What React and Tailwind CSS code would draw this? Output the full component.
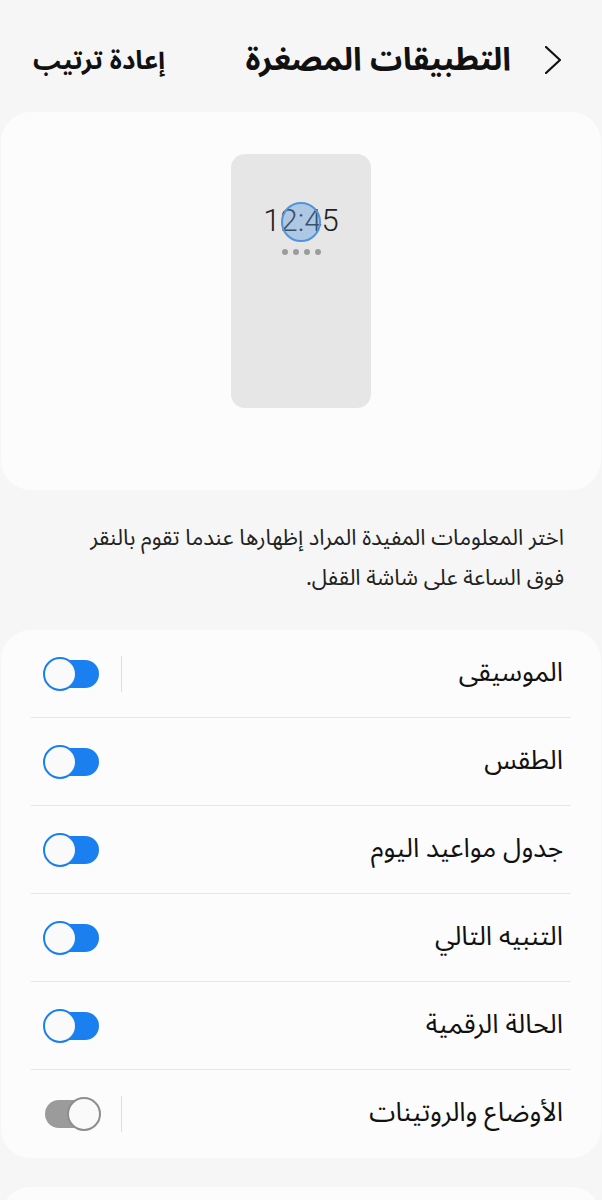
const rows = [
  { label: 'الموسيقى', on: true, divider: true },
  { label: 'الطقس', on: true },
  { label: 'جدول مواعيد اليوم', on: true },
  { label: 'التنبيه التالي', on: true },
  { label: 'الحالة الرقمية', on: true },
  { label: 'الأوضاع والروتينات', on: false, divider: true },
];

const Toggle = ({ on }) => {
  if (on) {
    return (
      <div className="relative w-[58px] h-[34px] shrink-0">
        <div className="absolute left-[2px] right-[2px] top-[3px] h-[28px] rounded-full bg-[#1a80ef]" />
        <div className="absolute left-0 top-0 w-[34px] h-[34px] rounded-full border-2 border-[#1a80ef] bg-[#fafafa]" />
      </div>
    );
  }
  return (
    <div className="relative w-[58px] h-[34px] shrink-0">
      <div className="absolute left-[2px] right-[2px] top-[3px] h-[28px] rounded-full bg-[#9b9b9b]" />
      <div className="absolute right-0 top-0 w-[34px] h-[34px] rounded-full border-2 border-[#8d8d8d] bg-[#fafafa]" />
    </div>
  );
};

const Row = ({ row, last }) => (
  <div className={`flex items-center h-[88px] ${last ? '' : 'border-b border-[#e6e6e6]'}`}>
    <span className="flex-1 pr-2 text-[26.5px] text-[#111]">{row.label}</span>
    {row.divider && <div className="w-px h-[36px] bg-[#dedede] ml-[20px]" />}
    <div className="pl-3">
      <Toggle on={row.on} />
    </div>
  </div>
);

export default function App() {
  return (
    <div
      dir="rtl"
      className="w-[602px] h-[1200px] overflow-hidden bg-[#f6f6f6]"
      style={{ fontFamily: "'Noto Sans Arabic', 'Noto Sans', 'DejaVu Sans', sans-serif" }}
    >
      {/* Header */}
      <div className="h-[112px] flex items-center pt-[8px] pr-[41px] pl-[33px]">
        <svg width="16" height="28" viewBox="0 0 16 28" className="shrink-0 text-[#111]">
          <polyline points="15,1 1,14 15,27" fill="none" stroke="currentColor" strokeWidth="2.2" strokeLinecap="round" strokeLinejoin="round" transform="scale(-1,1) translate(-16,0)" />
        </svg>
        <h1 className="mr-[34px] text-[32px] font-bold text-[#111]">التطبيقات المصغرة</h1>
        <span className="mr-auto text-[26px] font-bold text-[#111]">إعادة ترتيب</span>
      </div>

      {/* Preview */}
      <div className="mx-[1px] h-[378px] rounded-[30px] bg-[#fcfcfc] flex justify-center pt-[42px]">
        <div className="relative w-[140px] h-[254px] rounded-[14px] bg-[#e6e6e6] flex flex-col items-center pt-[51px]">
          <span
            className="text-[31px] font-light leading-none text-[#222]"
            style={{ fontFamily: 'Roboto, sans-serif' }}
            dir="ltr"
          >
            12:45
          </span>
          <div className="absolute left-[50px] top-[48px] w-[40px] h-[40px] rounded-full border-2 border-[#4f94dd] bg-[#5b9be0]/40" />
          <div className="flex gap-[5px] mt-[13px]" dir="ltr">
            <span className="w-[6px] h-[6px] rounded-full bg-[#9c9c9c]" />
            <span className="w-[6px] h-[6px] rounded-full bg-[#9c9c9c]" />
            <span className="w-[6px] h-[6px] rounded-full bg-[#9c9c9c]" />
            <span className="w-[6px] h-[6px] rounded-full bg-[#9c9c9c]" />
          </div>
        </div>
      </div>

      {/* Description */}
      <div className="px-[38px] pt-[28px] pb-[32px] text-[22px] leading-[40px] text-[#222]">
        <p>اختر المعلومات المفيدة المراد إظهارها عندما تقوم بالنقر</p>
        <p>فوق الساعة على شاشة القفل.</p>
      </div>

      {/* Toggles */}
      <div className="mx-[1px] rounded-[30px] bg-[#fcfcfc] px-[30px]">
        {rows.map((row, i) => (
          <Row key={row.label} row={row} last={i === rows.length - 1} />
        ))}
      </div>

      <div className="mx-[1px] mt-[29px] h-[60px] rounded-[30px] bg-[#fcfcfc]" />
    </div>
  );
}
